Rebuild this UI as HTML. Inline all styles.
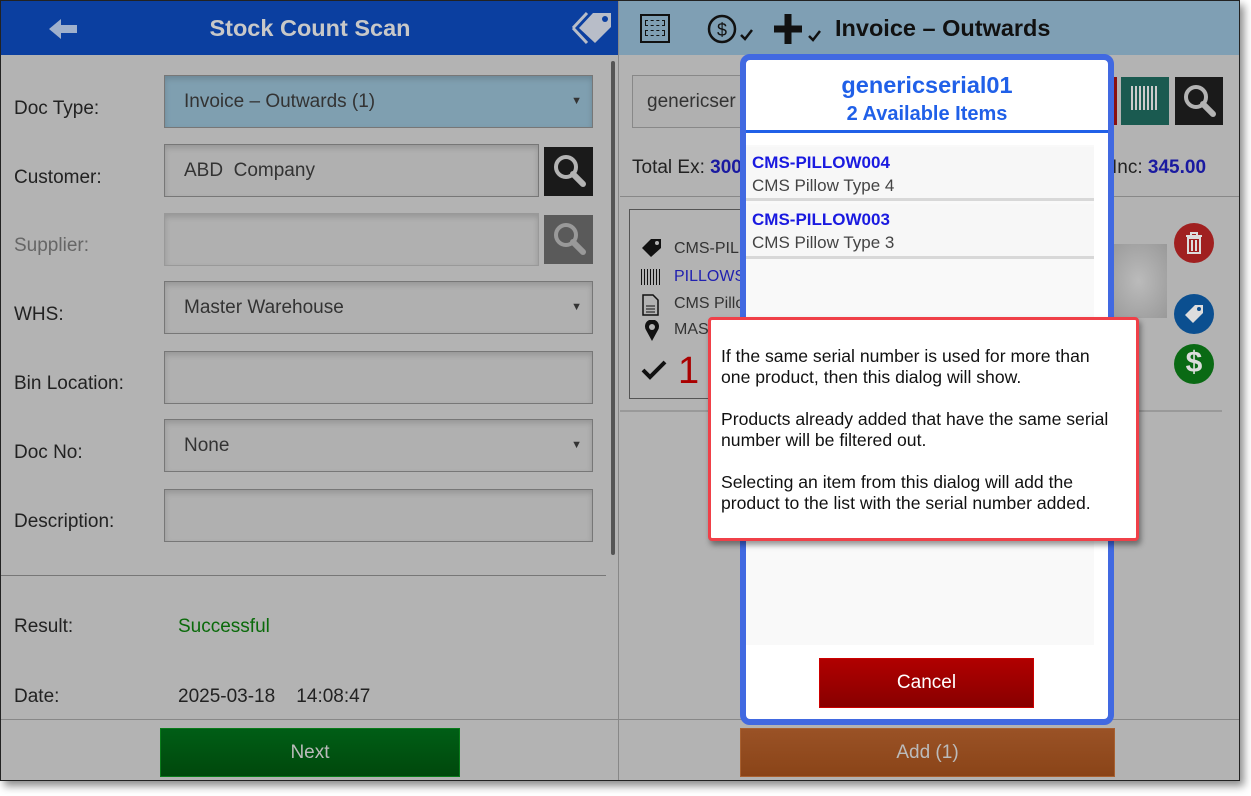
<!DOCTYPE html>
<html><head><meta charset="utf-8"><style>
*{box-sizing:border-box;margin:0;padding:0}
body{width:1251px;height:796px;background:#fff;font-family:"Liberation Sans",sans-serif;position:relative;overflow:hidden}
.a{position:absolute}
.frame{left:0;top:0;width:1240px;height:781px;background:#b3b3b3;border:1px solid #222;box-shadow:4px 5px 8px rgba(0,0,0,.45);overflow:hidden}
.lbl{position:absolute;left:13px;font-size:19px;color:#222}
.inp{position:absolute;left:163px;width:429px;height:53px;border:1px solid #777;background:#b0b0b0;box-shadow:inset 0 3px 6px rgba(0,0,0,.15);font-size:19px;color:#333;padding-left:19px;line-height:51px}
.arr{position:absolute;right:10px;top:0;font-size:11px;color:#333}
.sbtn{position:absolute;width:49px;height:49px}
.circ{position:absolute;width:40px;height:40px;border-radius:50%;left:1173px}
.ct{position:absolute;font-size:16px;color:#333;left:673px}
</style></head><body>
<div class="a frame">
<div class="a" style="left:0;top:0;width:618px;height:54px;background:#0b3fa0"></div>
<svg class="a" style="left:48px;top:17px" width="30" height="22" viewBox="0 0 30 22"><path d="M0 11 L12 1 L12 7 L28 7 L28 15 L12 15 L12 21 Z" fill="#9fb0cc"/></svg>
<div class="a" style="left:0;width:618px;top:14px;text-align:center;font-size:23.5px;font-weight:bold;color:#c8c8c8">Stock Count Scan</div>
<svg class="a" style="left:570px;top:10px" width="44" height="34" viewBox="0 0 44 34"><path d="M8 17 L22 2 L40 2 L40 16 L24 32 Z" fill="#b8bdc8"/><circle cx="34" cy="8" r="3" fill="#0b3fa0"/><path d="M2 17 L16 2 M2 17 L16 32" stroke="#b8bdc8" stroke-width="3" fill="none"/></svg>
<div class="lbl" style="top:97px">Doc Type:</div>
<div class="inp" style="top:74px;background:#7f9fb0">Invoice – Outwards (1)<span class="arr">▼</span></div>
<div class="lbl" style="top:166px">Customer:</div>
<div class="inp" style="top:143px;width:375px">ABD&nbsp; Company</div>
<div class="sbtn" style="left:543px;top:146px;background:#1a1a1a"></div>
<svg class="a" style="left:551px;top:152px" width="34" height="36"><circle cx="14" cy="14" r="10" stroke="#b3b3b3" stroke-width="4" fill="none"/><path d="M21 21 L31 31" stroke="#b3b3b3" stroke-width="6" stroke-linecap="round"/></svg>
<div class="lbl" style="top:234px;color:#666">Supplier:</div>
<div class="inp" style="top:212px;width:375px;border-color:#999"></div>
<div class="sbtn" style="left:543px;top:214px;background:#5a5a5a"></div>
<svg class="a" style="left:551px;top:220px" width="34" height="36"><circle cx="14" cy="14" r="10" stroke="#999" stroke-width="4" fill="none"/><path d="M21 21 L31 31" stroke="#999" stroke-width="6" stroke-linecap="round"/></svg>
<div class="lbl" style="top:303px">WHS:</div>
<div class="inp" style="top:280px">Master Warehouse<span class="arr">▼</span></div>
<div class="lbl" style="top:372px">Bin Location:</div>
<div class="inp" style="top:350px"></div>
<div class="lbl" style="top:441px">Doc No:</div>
<div class="inp" style="top:418px">None<span class="arr">▼</span></div>
<div class="lbl" style="top:510px">Description:</div>
<div class="inp" style="top:488px"></div>
<div class="a" style="left:610px;top:60px;width:4px;height:494px;background:#555;border-radius:2px"></div>
<div class="a" style="left:0;top:574px;width:605px;height:1px;background:#777"></div>
<div class="lbl" style="top:615px">Result:</div>
<div class="a" style="left:177px;top:615px;font-size:19px;color:#0a6a0a">Successful</div>
<div class="lbl" style="top:685px">Date:</div>
<div class="a" style="left:177px;top:685px;font-size:19px;color:#222">2025-03-18&nbsp;&nbsp;&nbsp; 14:08:47</div>
<div class="a" style="left:0;top:718px;width:1240px;height:1px;background:#888"></div>
<div class="a" style="left:159px;top:727px;width:300px;height:49px;background:linear-gradient(#005e16,#00480c);border:1px solid #0a7a1a;color:#bbb;font-size:19px;text-align:center;line-height:47px">Next</div>
<div class="a" style="left:617px;top:0;width:1px;height:781px;background:#888"></div>
<div class="a" style="left:618px;top:0;width:621px;height:54px;background:#7f9fb4"></div>
<div class="a" style="left:639px;top:13px;width:30px;height:29px;border:2px solid #111"></div>
<div class="a" style="left:644px;top:19px;width:20px;height:6px;border:1px dashed #111"></div>
<div class="a" style="left:644px;top:29px;width:20px;height:6px;border:1px dashed #111"></div>
<svg class="a" style="left:705px;top:12px" width="52" height="32"><circle cx="16" cy="16" r="13" stroke="#111" stroke-width="2.5" fill="none"/><text x="16" y="23" font-size="18" text-anchor="middle" font-family="Liberation Sans" fill="#111">$</text><path d="M35 22 L39 26 L46 17" stroke="#111" stroke-width="2.5" fill="none"/></svg>
<svg class="a" style="left:771px;top:11px" width="56" height="34"><path d="M16 2 V32 M2 17 H30" stroke="#111" stroke-width="7"/><path d="M37 24 L41 28 L48 19" stroke="#111" stroke-width="2.5" fill="none"/></svg>
<div class="a" style="left:834px;top:14px;font-size:23.5px;font-weight:bold;color:#111">Invoice – Outwards</div>
<div class="a" style="left:631px;top:74px;width:120px;height:53px;border:1px solid #888;background:#b0b0b0;font-size:19px;color:#333;padding-left:14px;line-height:51px">genericser</div>
<div class="a" style="left:1111px;top:76px;width:5px;height:48px;background:#8a1010"></div>
<div class="a" style="left:1120px;top:76px;width:48px;height:48px;background:#1a5a50"></div>
<div class="a" style="left:1130px;top:85px;width:28px;height:24px;background:repeating-linear-gradient(90deg,#ccc 0 2px,transparent 2px 4px)"></div>
<div class="a" style="left:1174px;top:76px;width:48px;height:48px;background:#1a1a1a"></div>
<svg class="a" style="left:1181px;top:82px" width="34" height="36"><circle cx="14" cy="14" r="10" stroke="#b3b3b3" stroke-width="4" fill="none"/><path d="M21 21 L31 31" stroke="#b3b3b3" stroke-width="6" stroke-linecap="round"/></svg>
<div class="a" style="left:631px;top:156px;font-size:19px;color:#222">Total Ex: <b style="color:#1a1aa0">300</b></div>
<div class="a" style="left:1111px;top:156px;font-size:19px;color:#222">Inc: <b style="color:#1a1aa0">345.00</b></div>
<div class="a" style="left:619px;top:195px;width:620px;height:1px;background:#888"></div>
<div class="a" style="left:628px;top:208px;width:120px;height:190px;border:1px solid #555"></div>
<svg class="a" style="left:640px;top:237px" width="22" height="20"><path d="M1 10 L10 1 L20 1 L20 10 L10 19 Z" fill="#111"/><circle cx="16" cy="5" r="2" fill="#b3b3b3"/></svg>
<div class="ct" style="top:239px">CMS-PIL</div>
<div class="a" style="left:640px;top:268px;width:21px;height:16px;background:repeating-linear-gradient(90deg,#111 0 1px,transparent 1px 3px)"></div>
<div class="ct" style="top:267px;color:#2020b0">PILLOWS</div>
<svg class="a" style="left:641px;top:293px" width="18" height="22"><path d="M1 1 H11 L16 6 V21 H1 Z" stroke="#111" stroke-width="1.5" fill="none"/><path d="M4 12 H13 M4 15 H13 M4 18 H13" stroke="#111"/></svg>
<div class="ct" style="top:294px">CMS Pillo</div>
<svg class="a" style="left:643px;top:319px" width="16" height="22"><path d="M8 21 L2 10 A7 7 0 1 1 14 10 Z" fill="#111"/><circle cx="8" cy="7" r="3" fill="#b3b3b3"/></svg>
<div class="ct" style="top:320px">MAS</div>
<svg class="a" style="left:640px;top:359px" width="26" height="20"><path d="M2 10 L9 17 L24 2" stroke="#111" stroke-width="4" fill="none"/></svg>
<div class="a" style="left:677px;top:349px;font-size:38px;color:#a00">1</div>
<div class="a" style="left:1109px;top:243px;width:57px;height:74px;background:radial-gradient(#bbb,#999)"></div>
<div class="circ" style="top:222px;background:#a02020"></div>
<svg class="a" style="left:1183px;top:230px" width="20" height="24"><path d="M2 5 H18 M7 5 V2 H13 V5 M4 7 H16 V22 H4 Z M8 9 V20 M12 9 V20" stroke="#ddd" stroke-width="2" fill="none"/></svg>
<div class="circ" style="top:293px;background:#0b4f90"></div>
<svg class="a" style="left:1181px;top:301px" width="24" height="24"><path d="M3 13 L13 3 L21 3 L21 11 L11 21 Z" fill="#ddd"/><circle cx="17" cy="7" r="2" fill="#0b4f90"/></svg>
<div class="circ" style="top:343px;background:#0a6a14"></div>
<div class="a" style="left:1173px;top:345px;width:40px;text-align:center;font-size:30px;font-weight:bold;color:#ddd">$</div>
<div class="a" style="left:619px;top:409px;width:602px;height:2px;background:#999"></div>
<div class="a" style="left:739px;top:727px;width:375px;height:49px;background:linear-gradient(#9a5226,#8a4418);border:1px solid #a86030;color:#bbb;font-size:19px;text-align:center;line-height:47px">Add (1)</div>
<div class="a" style="left:739px;top:53px;width:374px;height:671px;border:6px solid #4169e1;border-radius:10px;background:#fff;overflow:hidden">
 <div class="a" style="left:0;top:12px;width:362px;text-align:center;font-size:23.5px;font-weight:bold;color:#2060e8">genericserial01</div>
 <div class="a" style="left:0;top:43px;width:362px;text-align:center;font-size:20px;font-weight:bold;color:#2060e8">2 Available Items</div>
 <div class="a" style="left:0;top:70px;width:362px;height:3px;background:#2060e8"></div>
 <div class="a" style="left:0;top:85px;width:348px;height:500px;background:#f9f9f9"></div>
 <div class="a" style="left:0;top:87px;width:348px;height:54px;background:#f7f7f7;border-bottom:3px solid #d8d8d8"></div>
 <div class="a" style="left:6px;top:93px;font-size:17px;font-weight:bold;color:#1a1ae0">CMS-PILLOW004</div>
 <div class="a" style="left:6px;top:116px;font-size:17px;color:#444">CMS Pillow Type 4</div>
 <div class="a" style="left:0;top:144px;width:348px;height:55px;background:#f7f7f7;border-bottom:3px solid #d8d8d8"></div>
 <div class="a" style="left:6px;top:150px;font-size:17px;font-weight:bold;color:#1a1ae0">CMS-PILLOW003</div>
 <div class="a" style="left:6px;top:173px;font-size:17px;color:#444">CMS Pillow Type 3</div>
 <div class="a" style="left:73px;top:598px;width:215px;height:50px;background:linear-gradient(#b00000,#880000);border:1px solid #c00;color:#fff;font-size:19px;text-align:center;line-height:48px">Cancel</div>
</div>
<div class="a" style="left:707px;top:316px;width:431px;height:224px;background:#fff;border:3px solid #f04048;border-radius:4px;box-shadow:2px 4px 6px rgba(0,0,0,.4);padding:26px 0 0 10px;font-size:17.6px;line-height:21px;color:#111">
If the same serial number is used for more than<br>one product, then this dialog will show.<br><br>Products already added that have the same serial<br>number will be filtered out.<br><br>Selecting an item from this dialog will add the<br>product to the list with the serial number added.
</div>
</div>
</body></html>
